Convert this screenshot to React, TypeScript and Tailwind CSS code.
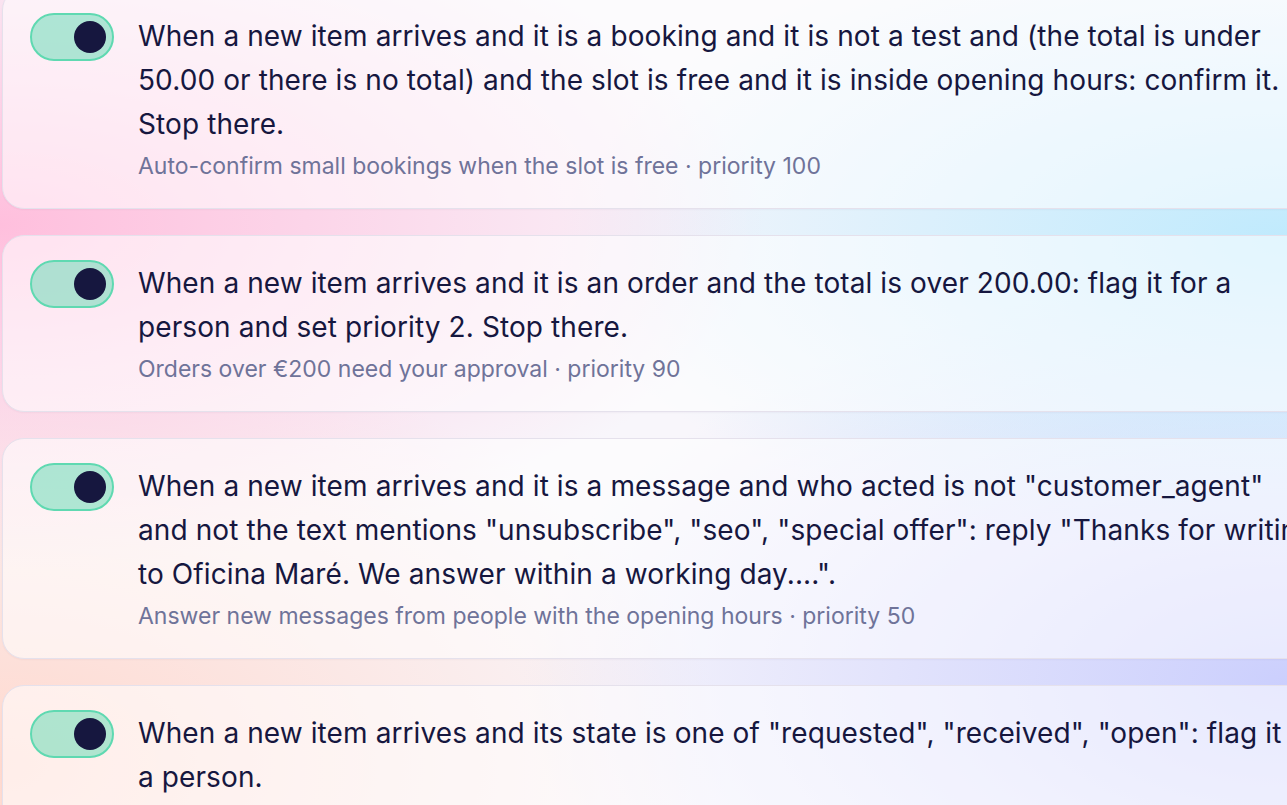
import { useState } from 'react';

interface Rule {
  id: number;
  lines: string[];
  summary: string;
  priority: number;
}

const rules: Rule[] = [
  {
    id: 1,
    lines: [
      'When a new item arrives and it is a booking and it is not a test and (the total is under',
      '50.00 or there is no total) and the slot is free and it is inside opening hours: confirm it.',
      'Stop there.',
    ],
    summary: 'Auto-confirm small bookings when the slot is free',
    priority: 100,
  },
  {
    id: 2,
    lines: [
      'When a new item arrives and it is an order and the total is over 200.00: flag it for a',
      'person and set priority 2. Stop there.',
    ],
    summary: 'Orders over €200 need your approval',
    priority: 90,
  },
  {
    id: 3,
    lines: [
      'When a new item arrives and it is a message and who acted is not "customer_agent"',
      'and not the text mentions "unsubscribe", "seo", "special offer": reply "Thanks for writing',
      'to Oficina Maré. We answer within a working day....".',
    ],
    summary: 'Answer new messages from people with the opening hours',
    priority: 50,
  },
  {
    id: 4,
    lines: [
      'When a new item arrives and its state is one of "requested", "received", "open": flag it for',
      'a person.',
    ],
    summary: 'Flag anything still waiting on a reply',
    priority: 40,
  },
];

function Toggle({ on, onChange }: { on: boolean; onChange: () => void }) {
  return (
    <button
      type="button"
      onClick={onChange}
      className={`flex h-[48px] w-[84px] shrink-0 items-center rounded-full border-2 px-[6px] ${
        on ? 'justify-end border-[#5fd9b1] bg-[#5fd9b1]/50' : 'justify-start border-[#d6d3e2] bg-white/60'
      }`}
    >
      <span className="block h-[32px] w-[32px] rounded-full bg-[#16173f]" />
    </button>
  );
}

function RuleCard({ rule }: { rule: Rule }) {
  const [on, setOn] = useState(true);
  return (
    <div className="flex items-start gap-6 rounded-[22px] border border-[#e5e1ec] bg-white/55 pb-[26px] pl-[27px] pr-6 pt-[24px] shadow-[0_1px_2px_rgba(40,30,80,0.04)]">
      <Toggle on={on} onChange={() => setOn(!on)} />
      <div className="min-w-0 pt-[1px]">
        <p className="whitespace-nowrap text-[28px] leading-[44px] tracking-[0.1px] text-[#16173f]">
          {rule.lines.map((l, i) => (
            <span key={i} className="block">
              {l}
            </span>
          ))}
        </p>
        <p className="mt-[4px] whitespace-nowrap text-[23px] leading-[32px] text-[#6f7399]">
          {rule.summary} · priority {rule.priority}
        </p>
      </div>
    </div>
  );
}

export default function App() {
  return (
    <div
      className="relative h-[805px] w-full overflow-hidden bg-[#f8f6fb] bg-[radial-gradient(ellipse_at_0%_28%,#ffbfdd_0%,rgba(255,191,221,0)_42%),radial-gradient(ellipse_at_100%_30%,#bfeafd_0%,rgba(191,234,253,0)_40%),radial-gradient(ellipse_at_100%_85%,#cbcffd_0%,rgba(203,207,253,0)_42%),radial-gradient(ellipse_at_0%_95%,#ffd9cf_0%,rgba(255,217,207,0)_40%)]"
      style={{ fontFamily: 'Inter, "Noto Sans", sans-serif' }}
    >
      <div className="-mt-[12px] ml-[2px] flex w-[1360px] flex-col gap-[26px]">
        {rules.map((r) => (
          <RuleCard key={r.id} rule={r} />
        ))}
      </div>
    </div>
  );
}
